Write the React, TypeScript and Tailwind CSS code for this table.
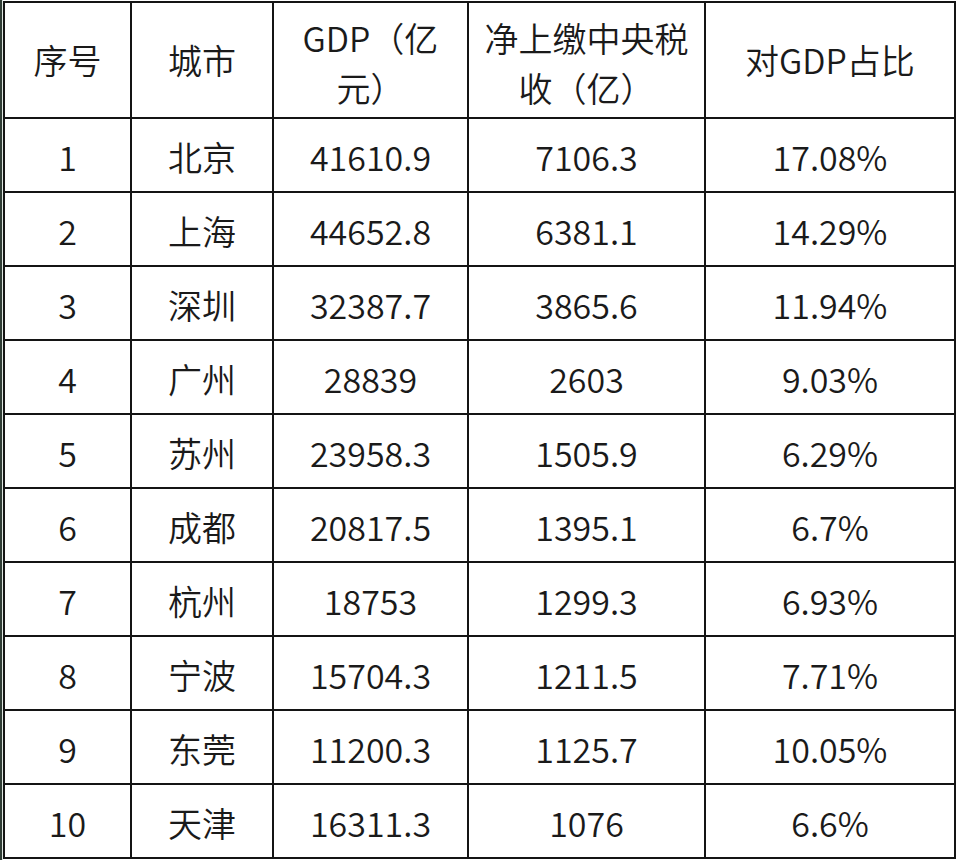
import React from "react";

type Row = {
  id: string;
  city: string;
  gdp: string;
  tax: string;
  ratio: string;
};

const rows: Row[] = [
  { id: "1", city: "北京", gdp: "41610.9", tax: "7106.3", ratio: "17.08%" },
  { id: "2", city: "上海", gdp: "44652.8", tax: "6381.1", ratio: "14.29%" },
  { id: "3", city: "深圳", gdp: "32387.7", tax: "3865.6", ratio: "11.94%" },
  { id: "4", city: "广州", gdp: "28839", tax: "2603", ratio: "9.03%" },
  { id: "5", city: "苏州", gdp: "23958.3", tax: "1505.9", ratio: "6.29%" },
  { id: "6", city: "成都", gdp: "20817.5", tax: "1395.1", ratio: "6.7%" },
  { id: "7", city: "杭州", gdp: "18753", tax: "1299.3", ratio: "6.93%" },
  { id: "8", city: "宁波", gdp: "15704.3", tax: "1211.5", ratio: "7.71%" },
  { id: "9", city: "东莞", gdp: "11200.3", tax: "1125.7", ratio: "10.05%" },
  { id: "10", city: "天津", gdp: "16311.3", tax: "1076", ratio: "6.6%" },
];

const headCell =
  "bg-white flex flex-col items-center justify-center leading-[50px]";
const headCellTwoLine = headCell + " pt-[6px]";
const bodyCell = "bg-white flex items-center justify-center pt-[2px]";

const App = () => {
  return (
    <div
      className="w-[960px] h-[860px] bg-white text-[34px] font-[350] text-[#1a1a1a] overflow-hidden"
      style={{ fontFamily: '"Noto Sans CJK SC", "Noto Sans", sans-serif' }}
    >
      <div className="flex h-full">
        {/* scan edge on the left */}
        <div className="w-[2px] h-full bg-[#2f3d35]" />
        <div className="w-px h-full bg-[#dfe6e1]" />

        <div className="pt-px">
          <div className="grid grid-cols-[125px_140px_193px_235px_248px] grid-rows-[114px_repeat(10,72px)] gap-[2px] bg-[#141414] p-[2px]">
            {/* Header */}
            <div className={headCell}>序号</div>
            <div className={headCell}>城市</div>
            <div className={headCellTwoLine}>
              <span>GDP（亿</span>
              <span>元）</span>
            </div>
            <div className={headCellTwoLine}>
              <span>净上缴中央税</span>
              <span>收（亿）</span>
            </div>
            <div className={headCell}>对GDP占比</div>

            {/* Rows */}
            {rows.map((row) => (
              <React.Fragment key={row.id}>
                <div className={bodyCell}>{row.id}</div>
                <div className={bodyCell}>{row.city}</div>
                <div className={bodyCell}>{row.gdp}</div>
                <div className={bodyCell}>{row.tax}</div>
                <div className={bodyCell}>{row.ratio}</div>
              </React.Fragment>
            ))}
          </div>
        </div>
      </div>
    </div>
  );
};

export default App;
